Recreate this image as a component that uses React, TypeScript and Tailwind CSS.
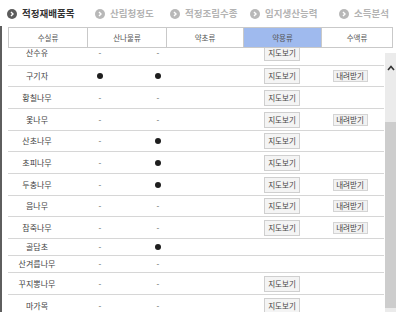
import React from 'react';

type Row = {
  name: string;
  a: boolean;
  b: boolean;
  map: boolean;
  down: boolean;
  h: string;
};

const rows: Row[] = [
  { name: '산수유', a: false, b: false, map: true, down: false, h: 'h-[25px]' },
  { name: '구기자', a: true, b: true, map: true, down: true, h: 'h-[21px]' },
  { name: '황칠나무', a: false, b: false, map: true, down: false, h: 'h-[22px]' },
  { name: '옻나무', a: false, b: false, map: true, down: true, h: 'h-[22px]' },
  { name: '산초나무', a: false, b: true, map: true, down: false, h: 'h-[21px]' },
  { name: '초피나무', a: false, b: true, map: true, down: false, h: 'h-[22px]' },
  { name: '두충나무', a: false, b: true, map: true, down: true, h: 'h-[22px]' },
  { name: '음나무', a: false, b: false, map: true, down: true, h: 'h-[21px]' },
  { name: '참죽나무', a: false, b: false, map: true, down: true, h: 'h-[22px]' },
  { name: '골담초', a: false, b: true, map: false, down: false, h: 'h-[17px]' },
  { name: '산겨릅나무', a: false, b: false, map: false, down: false, h: 'h-[17px]' },
  { name: '꾸지뽕나무', a: false, b: false, map: true, down: false, h: 'h-[22px]' },
  { name: '마가목', a: false, b: false, map: true, down: false, h: 'h-[22px]' },
];

const tabs = [
  { label: '적정재배품목', w: 'w-[88px]', active: true },
  { label: '산림청정도', w: 'w-[75px]', active: false },
  { label: '적정조림수종', w: 'w-[80px]', active: false },
  { label: '임지생산능력', w: 'w-[89px]', active: false },
  { label: '소득분석', w: 'w-[55px]', active: false },
];

const cats = [
  { label: '수실류', w: 'w-[78px]', on: false },
  { label: '산나물류', w: 'w-[79px]', on: false },
  { label: '약초류', w: 'w-[77px]', on: false },
  { label: '약용류', w: 'w-[78px]', on: true },
  { label: '수액류', w: 'flex-1', on: false },
];

const Arrow: React.FC<{ active: boolean }> = ({ active }) => (
  <span
    className={`flex h-[10px] w-[10px] items-center justify-center rounded-full ${
      active ? 'bg-[#5c5c5c]' : 'bg-[#b8b8b8]'
    }`}
  >
    <svg width="6" height="6" viewBox="0 0 6 6">
      <path d="M2 1 L4 3 L2 5" stroke="white" strokeWidth="1.4" fill="none" />
    </svg>
  </span>
);

const Mark: React.FC<{ on: boolean }> = ({ on }) =>
  on ? (
    <span className="h-[6px] w-[6px] rounded-full bg-[#1e1e1e]" />
  ) : (
    <span className="text-[8px] text-[#555]">-</span>
  );

export default function App() {
  return (
    <div className="h-[312px] w-[400px] overflow-hidden bg-white font-['Noto_Sans_CJK_KR',sans-serif]">
      <div className="flex h-[26px] items-center pl-[7px] pt-[2px]">
        {tabs.map((t) => (
          <div key={t.label} className={`flex items-center gap-[5px] ${t.w}`}>
            <Arrow active={t.active} />
            <span
              className={`text-[9.5px] font-bold leading-none ${
                t.active ? 'text-[#333]' : 'text-[#b3b3b3]'
              }`}
            >
              {t.label}
            </span>
          </div>
        ))}
      </div>

      <div className="h-[286px] border-l-2 border-[#5e5e5e] pl-[6px] pt-[1px]">
        <div className="relative z-10 flex h-[21px] w-[385px] border border-[#c9c9c9] bg-white">
          {cats.map((c, i) => (
            <div
              key={c.label}
              className={`flex items-center justify-center text-[7.5px] text-[#555] ${c.w} ${
                i > 0 ? 'border-l border-[#c9c9c9]' : ''
              } ${c.on ? 'bg-[#9fbaee]' : ''}`}
            >
              {c.label}
            </div>
          ))}
        </div>

        <div className="flex">
          <div className="h-[264px] w-[376px] overflow-hidden">
            <div className="-mt-[7px]">
              {rows.map((r) => (
                <div
                  key={r.name}
                  className={`grid grid-cols-[58px_68px_48px_62px_76px_60px_4px] items-center border-b border-[#d6d6d6] text-[8px] text-[#444] ${r.h}`}
                >
                  <div className="text-center">{r.name}</div>
                  <div className="flex justify-center">
                    <Mark on={r.a} />
                  </div>
                  <div className="flex justify-center">
                    <Mark on={r.b} />
                  </div>
                  <div />
                  <div className="flex justify-center">
                    {r.map && (
                      <span className="flex h-[16px] w-[36px] items-center justify-center border border-[#cfcfcf] bg-[#f4f4f4] text-[7.5px] text-[#444]">
                        지도보기
                      </span>
                    )}
                  </div>
                  <div className="flex justify-center">
                    {r.down && (
                      <span className="flex h-[12px] w-[35px] items-center justify-center border border-[#d4d4d4] bg-[#f2f2f2] text-[7.5px] text-[#444]">
                        내려받기
                      </span>
                    )}
                  </div>
                  <div />
                </div>
              ))}
            </div>
          </div>

          <div className="ml-[1px] mt-[5px] flex h-[259px] w-[11px] flex-col bg-[#ebebeb]">
            <div className="flex h-[69px] justify-center pt-[12px]">
              <svg width="8" height="6" viewBox="0 0 8 6">
                <path d="M1 5 L4 1.5 L7 5" stroke="#333" strokeWidth="1.6" fill="none" />
              </svg>
            </div>
            <div className="h-[186px] bg-[#cdcdcd]" />
          </div>
        </div>
      </div>
    </div>
  );
}
